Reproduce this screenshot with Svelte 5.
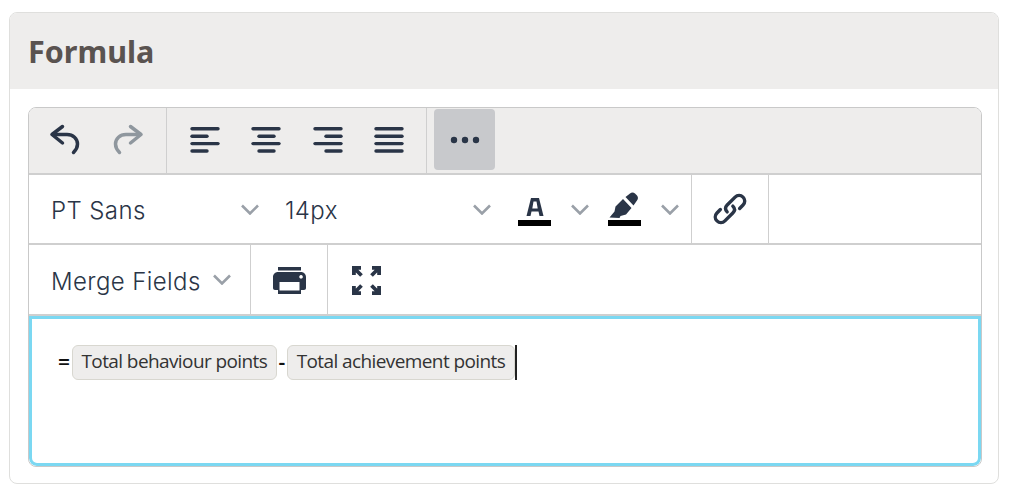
<script>
  // x offset and length of each bar in the alignment icons
  const aligns = [
    { name: 'Align left', lines: [[0, 26], [0, 15], [0, 26], [0, 15]] },
    { name: 'Align center', lines: [[0, 26], [6, 15], [0, 26], [6, 15]] },
    { name: 'Align right', lines: [[0, 26], [11, 15], [0, 26], [11, 15]] },
    { name: 'Justify', lines: [[0, 26], [0, 26], [0, 26], [0, 26]] }
  ];
</script>

{#snippet chevron()}
  <svg class="chevron" width="18" height="11" viewBox="0 0 18 11" fill="none" stroke="#9aa0a8" stroke-width="2.6">
    <path d="M1 1.500l8 8 8-8" />
  </svg>
{/snippet}

<div class="panel">
  <header class="panel__head">
    <h2 class="panel__title">Formula</h2>
  </header>
  <div class="panel__body">
    <div class="editor">
      <div class="row row--grey">
        <div class="group group--history">
          <button class="btn" aria-label="Undo">
            <svg width="32" height="32" viewBox="0 0 32 32" fill="none" stroke="#2a3547" stroke-width="3.500" stroke-linecap="round" stroke-linejoin="round">
              <path d="M13.500 2.500L3 10.500l10.500 8.500" />
              <path d="M3.500 10.500H18c6 0 10.500 4 10.500 9.500 0 3-1.500 6-4 8.500" />
            </svg>
          </button>
          <button class="btn btn--redo" aria-label="Redo">
            <svg width="32" height="32" viewBox="0 0 32 32" fill="none" stroke="#8f979e" stroke-width="3.500" stroke-linecap="round" stroke-linejoin="round">
              <path d="M18.500 2.500L29 10.500l-10.500 8.500" />
              <path d="M28.500 10.500H14c-6 0-10.500 4-10.500 9.500 0 3 1.500 6 4 8.500" />
            </svg>
          </button>
        </div>
        <div class="group group--align">
          {#each aligns as a}
            <button class="btn" aria-label={a.name}>
              <svg width="30" height="26" viewBox="0 0 30 26" fill="none" stroke="#2a3547" stroke-width="3.400" stroke-linecap="round">
                {#each a.lines as l, i}
                  <path d="M{l[0] + 2} {1.800 + i * 7.400}h{l[1]}" />
                {/each}
              </svg>
            </button>
          {/each}
        </div>
        <div class="group group--more">
          <button class="btn btn--active" aria-label="More">
            <svg width="30" height="8" viewBox="0 0 30 8" fill="#2a3547">
              <circle cx="4" cy="4" r="3.200" /><circle cx="15" cy="4" r="3.200" /><circle cx="26" cy="4" r="3.200" />
            </svg>
          </button>
        </div>
      </div>

      <div class="row">
        <div class="group group--fonts">
          <span class="select select--family"><span class="label">PT Sans</span> {@render chevron()}</span>
          <span class="select select--size"><span class="label">14px</span> {@render chevron()}</span>
          <button class="swatch swatch--text" aria-label="Text color">
            <svg width="34" height="34" viewBox="0 0 34 34" fill="#2a3547">
              <path fill-rule="evenodd" d="M13 6h8l4.500 18H21.500l-1-4.500h-7L12.500 24H8.500zM14.300 16.500h5.400L18.500 9.500h-3z" />
              <rect x="0" y="28" width="33" height="6" fill="#000" />
            </svg>
            {@render chevron()}
          </button>
          <button class="swatch swatch--mark" aria-label="Highlight color">
            <svg width="34" height="34" viewBox="0 0 34 34" fill="#2a3547">
              <path d="M1.500 25.500L6.500 19.500l1-5L15 7l8.500 9-5.500 6.500-5.500 1.500-1 2z" />
              <path d="M17.500 5l4.500-3.500c1.500-1.200 3.500-1.200 5 0l2 2c1.300 1.500 1.300 3.500 0 5L25.500 13.500z" />
              <rect x="0" y="28" width="33" height="6" fill="#000" />
            </svg>
            {@render chevron()}
          </button>
        </div>
        <div class="group group--link">
          <button class="btn btn--plain" aria-label="Link">
            <svg width="34" height="34" viewBox="2 2 30 30" fill="none" stroke="#2a3547" stroke-width="3" stroke-linecap="round">
              <path d="M14.500 19.500c-2-2-2-4 0-6l7-7c2-2 5-2 7 0s2 5 0 7l-3 3" />
              <path d="M19.500 14.500c2 2 2 4 0 6l-7 7c-2 2-5 2-7 0s-2-5 0-7l3-3" />
            </svg>
          </button>
        </div>
      </div>

      <div class="row row--last">
        <div class="group group--merge">
          <span class="select"><span class="label">Merge Fields</span> {@render chevron()}</span>
        </div>
        <div class="group group--print">
          <button class="btn btn--plain" aria-label="Print">
            <svg width="33" height="27" viewBox="0 0 33 27" fill="#2a3547">
              <path fill-rule="evenodd" d="M5 0h23v3.500H5zM5 5h23c2.800 0 5 2.200 5 5v11c0 1-.8 2-2 2h-3v4H5v-4H2c-1.200 0-2-1-2-2V10c0-2.800 2.200-5 5-5zM6.500 15v8.500h20V15zM28 8a1.800 1.800 0 1 0 .1 0z" />
            </svg>
          </button>
        </div>
        <div class="group group--expand">
          <button class="btn btn--plain" aria-label="Fullscreen">
            <svg width="29" height="29" viewBox="0 0 29 29" fill="none" stroke="#2a3547" stroke-width="3.800">
              <path d="M1.900 9V1.900H9M2.500 2.500l7 7" />
              <path d="M27.100 9V1.900H20M26.500 2.500l-7 7" />
              <path d="M1.900 20v7.100H9M2.500 26.500l7-7" />
              <path d="M27.100 20v7.100H20M26.500 26.500l-7-7" />
            </svg>
          </button>
        </div>
      </div>

      <div class="content">
        <span class="op op--eq">=</span><span class="chip">Total behaviour points</span><span class="op op--minus">-</span><span class="chip">Total achievement points</span><span class="caret"></span>
      </div>
    </div>
  </div>
</div>

<style>
  :global(body) {
    background: #fff;
  }

  .panel {
    margin: 12px 13px 0 9px;
    height: 472px;
    box-sizing: border-box;
    border: 1px solid #dfdfdd;
    border-radius: 8px;
    overflow: hidden;
  }

  .panel__head {
    height: 76px;
    background: #eeedec;
    display: flex;
    align-items: center;
    padding-left: 18px;
  }

  .panel__title {
    margin: 0;
    font: 700 30.500px "Noto Sans", sans-serif;
    color: #5a5350;
  }

  .panel__body {
    padding: 18px 16px 0 18px;
  }

  .editor {
    border: 1px solid #c9c9c9;
    border-radius: 8px;
    overflow: hidden;
    height: 360px;
    box-sizing: border-box;
  }

  .row {
    display: flex;
    height: 68px;
    border-bottom: 2px solid #cfcfcf;
    color: #2a3547;
    font: 300 24px/1 "Inter", sans-serif;
  }

  .row--grey {
    height: 65px;
    background: #eeedec;
  }

  .row--last {
    height: 69px;
  }

  .label {
    padding-top: 4px;
  }

  .group {
    display: flex;
    align-items: center;
    box-sizing: border-box;
    height: 100%;
  }

  .group--history {
    width: 138px;
    padding: 1px 0 3px 5px;
    border-right: 1px solid #cfcfcf;
  }

  .group--align {
    width: 260px;
    padding: 1px 0 3px 7px;
    border-right: 1px solid #cfcfcf;
  }

  .group--more {
    padding: 1px 0 3px 7px;
  }

  .group--fonts {
    width: 663px;
    padding-left: 22px;
    border-right: 1px solid #cfcfcf;
  }

  .group--link {
    width: 77px;
    border-right: 1px solid #cfcfcf;
  }

  .group--merge {
    width: 222px;
    padding-left: 22px;
    border-right: 1px solid #cfcfcf;
  }

  .group--print {
    width: 77px;
    padding-top: 2px;
    border-right: 1px solid #cfcfcf;
  }

  .group--expand {
    width: 77px;
    padding-top: 1px;
  }

  .btn {
    width: 61.500px;
    height: 61px;
    flex: none;
    padding: 0;
    border: 0;
    border-radius: 4px;
    background: none;
    display: flex;
    align-items: center;
    justify-content: center;
  }

  .btn--redo {
    margin-left: 2px;
  }

  .btn--active {
    width: 61px;
    background: #c8c9cc;
  }

  .btn--plain {
    width: 100%;
  }

  .select {
    display: flex;
    align-items: center;
    justify-content: space-between;
    white-space: nowrap;
    flex: none;
    gap: 12px;
    letter-spacing: 0.4px;
  }

  .select--family {
    width: 208px;
    margin-right: 26px;
  }

  .select--size {
    width: 206px;
  }

  .chevron {
    flex: none;
  }

  .swatch {
    display: flex;
    align-items: center;
    padding: 0;
    border: 0;
    background: none;
    flex: none;
    gap: 19px;
  }

  .swatch--text {
    margin-left: 27px;
  }

  .swatch--mark {
    margin-left: 19px;
  }

  .content {
    height: 150px;
    box-sizing: border-box;
    border: 3px solid #7bd8f2;
    border-radius: 0 0 8px 8px;
    padding: 26px;
    display: flex;
    align-items: flex-start;
    font: 400 19px/1.2 "Open Sans", sans-serif;
    color: #111;
  }

  .chip {
    height: 35px;
    box-sizing: border-box;
    display: flex;
    align-items: center;
    padding: 0 9px 2px;
    background: #eeedec;
    border: 1px solid #d8d7d0;
    border-radius: 6px;
    color: #333;
    letter-spacing: -0.6px;
    white-space: nowrap;
  }

  .op {
    height: 35px;
    display: flex;
    align-items: center;
    font-size: 21px;
    font-weight: 600;
  }

  .op--eq {
    width: 13.500px;
  }

  .op--minus {
    width: 9.500px;
    justify-content: center;
  }

  .caret {
    width: 2px;
    height: 35px;
    background: #222;
  }
</style>
